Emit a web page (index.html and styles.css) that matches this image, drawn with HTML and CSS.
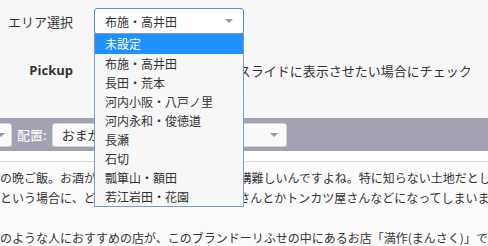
FILE: index.html
```html
<!DOCTYPE html>
<html lang="ja">
  <head>
    <meta charset="UTF-8" />
    <title>エリア選択</title>
    <link rel="stylesheet" href="styles.css">
  </head>
  <body>
    <div class="settings">
      <div class="field">
        <label class="field-label">エリア選択</label>
        <div class="area-wrap">
          <div class="select select-focus">
            <span>布施・高井田</span>
            <i class="arrow"></i>
          </div>
          <ul class="dropdown">
            <li class="active">未設定</li>
            <li>布施・高井田</li>
            <li>長田・荒本</li>
            <li>河内小阪・八戸ノ里</li>
            <li>河内永和・俊徳道</li>
            <li>長瀬</li>
            <li>石切</li>
            <li>瓢箪山・額田</li>
            <li>若江岩田・花園</li>
          </ul>
        </div>
      </div>
      <div class="field field-pickup">
        <label class="field-label bold">Pickup</label>
        <div class="check">
          <input type="checkbox" />
          <span>トップページ上部のスライドに表示させたい場合にチェック</span>
        </div>
      </div>
    </div>

    <div class="toolbar">
      <div class="select select-small select-cut"><i class="arrow"></i></div>
      <span class="toolbar-label">配置:</span>
      <div class="select select-small select-wide">
        <span>おまかせ</span>
        <i class="arrow"></i>
      </div>
    </div>

    <div class="content">
      <p>
        の晩ご飯。お酒が飲めるいいお店探しって結構難しいんですよね。特に知らない土地だとしたら<br />
        という場合に、どこに行くか悩んで、牛丼屋さんとかトンカツ屋さんなどになってしまいますよね<br />
        <br />
        のような人におすすめの店が、このブランドーリふせの中にあるお店「満作(まんさく)」です。
      </p>
    </div>
  </body>
</html>
```

FILE: styles.css
```css
body {
  margin: 0;
  background: #fbfbfb;
  font-family: "Noto Sans CJK JP", "Noto Sans", sans-serif;
  color: #333;
  overflow: hidden;
}

.settings {
  background: #f7f7f7;
  height: 118px;
  padding-top: 8px;
  box-sizing: border-box;
}

.field {
  display: flex;
  align-items: center;
  gap: 21px;
}

.field-label {
  width: 73px;
  text-align: right;
  font-size: 13px;
  line-height: 25px;
  color: #333;
}

.bold {
  font-weight: bold;
  font-family: "Open Sans", sans-serif;
}

.field-pickup {
  margin-top: 24px;
}

.area-wrap {
  position: relative;
}

/* セレクトボックス風 */
.select {
  display: flex;
  align-items: center;
  justify-content: space-between;
  box-sizing: border-box;
  background: #fff;
  border: 1px solid #ccc;
  border-radius: 3px;
  font-size: 12px;
}

.select-focus {
  width: 150px;
  height: 26px;
  padding: 0 10px 0 10px;
  border-color: #4a90e2;
}

.arrow {
  width: 0;
  height: 0;
  border-left: 4px solid transparent;
  border-right: 4px solid transparent;
  border-top: 4px solid #999;
}

.dropdown {
  position: absolute;
  top: 25px;
  left: 0;
  width: 150px;
  box-sizing: border-box;
  margin: 0;
  padding: 0;
  list-style: none;
  background: #f7f7f7;
  border: 1px solid #7f9cc9;
  font-size: 12px;
}

.dropdown li {
  height: 19px;
  line-height: 19px;
  padding-left: 10px;
  white-space: nowrap;
}

.dropdown li.active {
  background: #1e90ff;
  color: #fff;
  height: 20px;
  line-height: 20px;
}

.check {
  display: flex;
  align-items: center;
  font-size: 13px;
  white-space: nowrap;
}

.check input {
  margin: 0 14px 0 0;
}

.toolbar {
  display: flex;
  align-items: center;
  gap: 5px;
  height: 33px;
  background: #a3a2b3;
}

.select-small {
  height: 24px;
  border-color: #d4d4d4;
  background: #fafafa;
}

.select-cut {
  width: 92px;
  margin-left: -80px;
  padding-right: 6px;
  justify-content: flex-end;
}

.toolbar-label {
  color: #fff;
  font-size: 13px;
}

.select-wide {
  width: 235px;
  padding: 0 8px 0 9px;
  font-size: 13px;
}

.content {
  border-top: 10px solid #fff;
  box-shadow: inset 0 1px 0 #d8d8d8;
  padding-top: 7px;
}

.content p {
  margin: 0;
  font-size: 12px;
  line-height: 20px;
  white-space: nowrap;
}
```
